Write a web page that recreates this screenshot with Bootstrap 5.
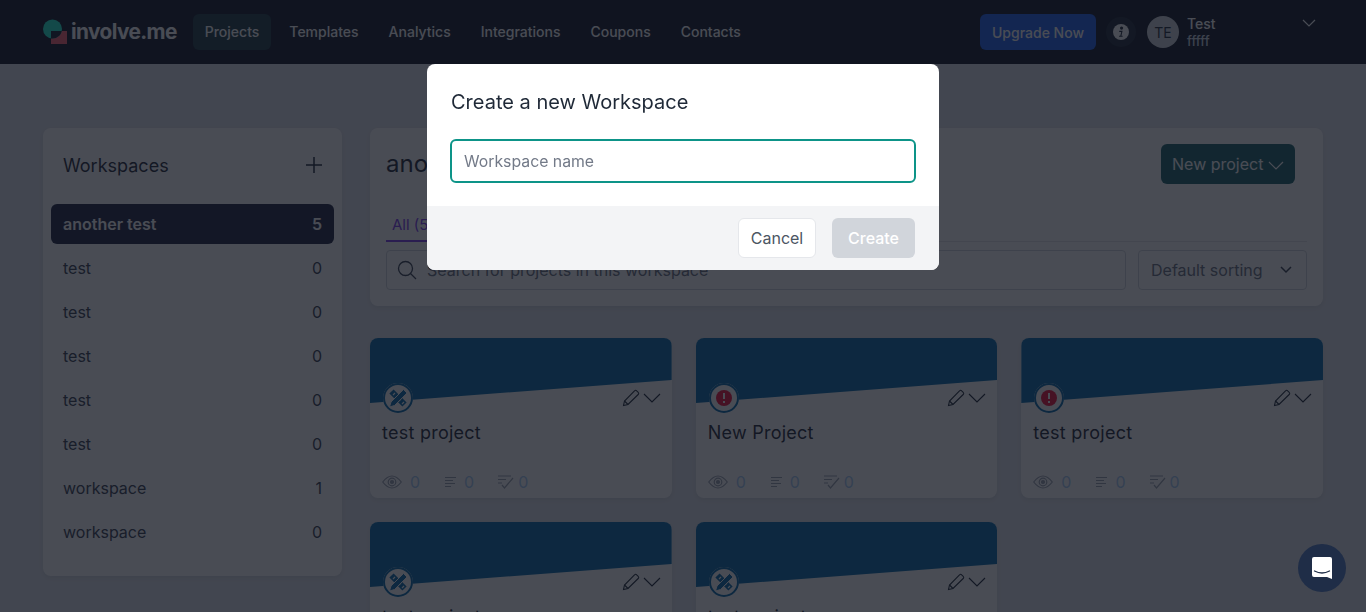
<!DOCTYPE html>
<html lang="en">
<head>
  <meta charset="UTF-8">
  <title>involve.me - Projects</title>
  <link href="https://cdn.jsdelivr.net/npm/bootstrap@5.3.0/dist/css/bootstrap.min.css" rel="stylesheet">
  <style>
    html, body { height: 100%; overflow: hidden; }
    body { font-family: Inter, "Liberation Sans", sans-serif; background: #e2e5ec; color: #1f2937; }

    /* top bar */
    .top-bar { height: 64px; background: #111827; padding: 0 43px; }
    .logo-text { font-size: 20.800px; font-weight: 700; color: #fff; letter-spacing: -.6px; margin-left: 4px; line-height: 1; }
    .top-link { font-size: 14px; font-weight: 500; color: #fff; padding: 0 12px; height: 36px; line-height: 36px; border-radius: 6px; text-decoration: none; }
    .top-link.is-active { background: #1d3b45; }
    .upgrade-btn { width: 116px; height: 36px; background: #1d5ff0; color: #fff; font-size: 14px; font-weight: 500; border: 0; border-radius: 6px; padding: 0; }
    .info-dot { width: 30px; height: 30px; border-radius: 50%; background: #1f2937; margin-left: 10px; }
    .avatar-dot { width: 32px; height: 32px; border-radius: 50%; background: #d1d5db; color: #1f2d3d; font-size: 14px; margin-left: 11px; }
    .user-name { font-size: 14px; font-weight: 500; color: #fff; line-height: 17px; }
    .user-sub { font-size: 13px; font-weight: 500; color: #cbd5e1; line-height: 18px; }
    .user-box { margin-left: 8px; width: 122px; }
    .user-caret { position: absolute; top: 19px; left: 1302px; }

    /* page */
    .page-wrap { padding: 64px 43px 0; gap: 28px; }
    .side-panel { width: 299px; height: 448px; flex: none; background: #fff; border: 0; border-radius: 8px; padding: 0 8px; }
    .side-head { height: 76px; padding: 0 12px 2px; font-size: 18px; }
    .ws-row { height: 40px; margin-bottom: 4px; padding: 0 12px; font-size: 16px; color: #374151; border-radius: 6px; }
    .ws-row.is-active { background: #1f2540; color: #fff; font-weight: 600; }
    .main-col { width: 953px; flex: none; }
    .head-panel { height: 178px; background: #fff; border: 0; border-radius: 8px; padding: 16px; position: relative; }
    .head-title { font-size: 24px; line-height: 40px; margin: 0; }
    .new-btn { position: absolute; top: 16px; right: 28px; width: 134px; height: 40px; background: #1c636b; color: #fff; font-size: 16px; border: 0; border-radius: 6px; padding: 0; }
    .tab-line { margin-top: 24px; height: 34px; border-bottom: 1px solid #e5e7eb; font-size: 15px; }
    .tab-all { display: inline-block; height: 34px; line-height: 34px; padding: 0 6px; color: #7c3aed; border-bottom: 2px solid #7c3aed; }
    .search-row { margin-top: 8px; gap: 12px; }
    .search-box { width: 740px; height: 40px; border: 1px solid #d1d5db; border-radius: 4px; padding-left: 10px; font-size: 16px; color: #6b7280; gap: 10px; }
    .sort-box { width: 169px; height: 40px; border: 1px solid #d1d5db; border-radius: 4px; padding: 0 14px 0 12px; font-size: 16px; color: #6b7280; }

    /* project cards */
    .grid-wrap { display: grid; grid-template-columns: repeat(3, 1fr); gap: 24px; margin-top: 32px; }
    .proj-card { height: 160px; background: #fff; border: 0; border-radius: 8px; position: relative; overflow: hidden; }
    .proj-banner { height: 65px; background: #076bab; clip-path: polygon(0 0, 100% 0, 100% 42px, 0 65px); }
    .proj-badge { position: absolute; left: 13px; top: 45px; width: 30px; height: 30px; border-radius: 50%; background: #fff; }
    .proj-tools { position: absolute; top: 51px; right: 11px; gap: 3px; }
    .proj-name { font-size: 18px; line-height: 28px; margin: 16px 12px 0; letter-spacing: .25px; }
    .proj-stats { margin: 23px 12px 0; height: 24px; font-size: 16px; color: #a8cdf5; }
    .stat-num { margin-left: 8px; margin-right: 24px; }
    .stat-num.tight { margin-left: 4px; }

    /* modal */
    .modal-backdrop.show { background: #10141e; opacity: .76; }
    .ws-dialog { max-width: 512px; margin: 64px auto 0; }
    .ws-content { border: 0; border-radius: 8px; overflow: hidden; }
    .ws-body { height: 142px; padding: 24px; }
    .ws-title { font-size: 20px; line-height: 28px; margin: 0 0 0; }
    .ws-input { margin: 23px 0 0 -1px; width: 466px; height: 44px; border: 2px solid #0d9488; border-radius: 6px; padding: 0 12px; font-size: 15.800px; box-shadow: none; }
    .ws-input::placeholder { color: #737a88; }
    .ws-foot { height: 64px; background: #f3f4f6; padding: 12px 24px; gap: 16px; }
    .btn-cancel { width: 78px; height: 40px; background: #fff; border: 1px solid #e5e7eb; border-radius: 6px; color: #4b5563; font-size: 16px; padding: 0; }
    .btn-create { width: 83px; height: 40px; background: #d1d5db; border: 0; border-radius: 6px; color: #fff; font-size: 16px; font-weight: 500; padding: 0; }

    /* chat bubble */
    .chat-bubble { position: fixed; left: 1298px; top: 544px; width: 48px; height: 48px; border-radius: 50%; background: #1f2d47; z-index: 1060; }
  </style>
</head>
<body>

  <!-- Navigation Bar -->
  <nav class="top-bar d-flex align-items-center">
    <svg width="24" height="26" viewBox="0 0 24 26">
      <clipPath id="logoClip"><rect x="8" y="12" width="16" height="13"/></clipPath>
      <rect x="8" y="12" width="16" height="13" fill="#ff6070"/>
      <circle cx="9.500" cy="10" r="9.500" fill="#20f0d0"/>
      <circle cx="9.500" cy="10" r="9.500" fill="#17202f" clip-path="url(#logoClip)"/>
    </svg>
    <span class="logo-text">involve.me</span>
    <div class="d-flex align-items-center" style="margin-left:16px;gap:6px">
      <a class="top-link is-active" href="#">Projects</a>
      <a class="top-link" href="#">Templates</a>
      <a class="top-link" href="#">Analytics</a>
      <a class="top-link" href="#">Integrations</a>
      <a class="top-link" href="#">Coupons</a>
      <a class="top-link" href="#">Contacts</a>
    </div>
    <div class="d-flex align-items-center ms-auto" style="margin-right:14px">
      <button class="upgrade-btn">Upgrade Now</button>
      <span class="info-dot d-flex align-items-center justify-content-center">
        <svg width="16" height="16" viewBox="0 0 14 14">
          <circle cx="7" cy="7" r="7" fill="#fff"/>
          <circle cx="7.500" cy="3.600" r="1.400" fill="#1f2937"/>
          <path d="M5.500 6h2.900l-1 4.200h1v1H5.300l.1-1h1l.8-3.200H5.400z" fill="#1f2937"/>
        </svg>
      </span>
      <span class="avatar-dot d-flex align-items-center justify-content-center">TE</span>
      <div class="user-box">
        <div class="user-name">Test</div>
        <div class="user-sub">fffff</div>
      </div>
    </div>
    <svg class="user-caret" width="14" height="8" viewBox="0 0 14 8" fill="none" stroke="#fff" stroke-width="1.200"><path d="M1 1l6 6 6-6"/></svg>
  </nav>

  <div class="page-wrap d-flex align-items-start">
    <!-- Workspaces -->
    <aside class="side-panel card shadow-sm">
      <div class="side-head d-flex align-items-center justify-content-between">
        <span>Workspaces</span>
        <svg width="16" height="16" viewBox="0 0 16 16" stroke="#1f2937" stroke-width="1.500"><path d="M8 0v16M0 8h16"/></svg>
      </div>
      <div class="ws-row is-active d-flex align-items-center justify-content-between"><span>another test</span><span>5</span></div>
      <div class="ws-row d-flex align-items-center justify-content-between"><span>test</span><span>0</span></div>
      <div class="ws-row d-flex align-items-center justify-content-between"><span>test</span><span>0</span></div>
      <div class="ws-row d-flex align-items-center justify-content-between"><span>test</span><span>0</span></div>
      <div class="ws-row d-flex align-items-center justify-content-between"><span>test</span><span>0</span></div>
      <div class="ws-row d-flex align-items-center justify-content-between"><span>test</span><span>0</span></div>
      <div class="ws-row d-flex align-items-center justify-content-between"><span>workspace</span><span>1</span></div>
      <div class="ws-row d-flex align-items-center justify-content-between"><span>workspace</span><span>0</span></div>
    </aside>

    <main class="main-col">
      <section class="head-panel card shadow-sm d-block">
        <h1 class="head-title fw-normal">another test</h1>
        <button class="new-btn">New project
          <svg width="16" height="9" viewBox="0 0 16 9" fill="none" stroke="#fff" stroke-width="1.200"><path d="M1 1l7 7 7-7"/></svg>
        </button>
        <div class="tab-line"><span class="tab-all">All (5)</span></div>
        <div class="search-row d-flex">
          <div class="search-box d-flex align-items-center">
            <svg width="20" height="20" viewBox="0 0 20 20" fill="none" stroke="#374151" stroke-width="1.300"><circle cx="8.500" cy="8.500" r="7"/><path d="M13.500 13.500l5.500 5.500"/></svg>
            <span>Search for projects in this workspace</span>
          </div>
          <div class="sort-box d-flex align-items-center justify-content-between">
            <span>Default sorting</span>
            <svg width="12" height="8" viewBox="0 0 12 8" fill="none" stroke="#374151" stroke-width="1.500"><path d="M1 1l5 5 5-5"/></svg>
          </div>
        </div>
      </section>

      <div class="grid-wrap" id="grid"></div>
    </main>
  </div>

  <!-- Modal -->
  <div class="modal-backdrop show"></div>
  <div class="modal d-block" tabindex="-1">
    <div class="modal-dialog ws-dialog">
      <div class="modal-content ws-content">
        <div class="ws-body">
          <h2 class="ws-title fw-normal">Create a new Workspace</h2>
          <input type="text" class="form-control ws-input" placeholder="Workspace name">
        </div>
        <div class="ws-foot d-flex justify-content-end">
          <button class="btn-cancel">Cancel</button>
          <button class="btn-create">Create</button>
        </div>
      </div>
    </div>
  </div>

  <!-- Chat bubble -->
  <div class="chat-bubble d-flex align-items-center justify-content-center">
    <svg width="22" height="24" viewBox="0 0 22 24">
      <path d="M3 1h16a2 2 0 0 1 2 2v20l-5-2H3a2 2 0 0 1-2-2V3a2 2 0 0 1 2-2z" fill="#fff"/>
      <path d="M3.500 15q7.500 4 15 0" fill="none" stroke="#1f2d47" stroke-width="1.300" stroke-linecap="round"/>
    </svg>
  </div>

  <script src="https://cdn.jsdelivr.net/npm/bootstrap@5.3.0/dist/js/bootstrap.bundle.min.js"></script>
  <script>
    const badgeRing = `<circle cx="15" cy="15" r="14" fill="none" stroke="#076bab" stroke-width="2"/>`;
    // crossed ruler and pencil
    const toolsIcon = `<svg width="30" height="30" viewBox="0 0 30 30">${badgeRing}
      <path d="M8.500 8.500L21.500 21.500" stroke="#076bab" stroke-width="6"/>
      <path d="M10 12l2-2M13 15l2-2M16 18l2-2M19 21l2-2" stroke="#fff" stroke-width="1.200"/>
      <path d="M20.500 6.500l3.500 3.500L11.500 22.500l-5 1.500L8 19z" fill="#076bab" stroke="#fff" stroke-width="1"/>
    </svg>`;
    const alertIcon = `<svg width="30" height="30" viewBox="0 0 30 30">${badgeRing}
      <circle cx="15" cy="15" r="8" fill="#f00f38"/>
      <path d="M15 10v6M15 18v2" stroke="#fff" stroke-width="2"/>
    </svg>`;
    const projects = [
      ['test project', toolsIcon], ['New Project', alertIcon], ['test project', alertIcon],
      ['test project', toolsIcon], ['test project', toolsIcon]
    ];

    // Project cards
    document.getElementById('grid').innerHTML = projects.map(([name, icon]) => `
      <div class="proj-card card shadow-sm d-block">
        <div class="proj-banner"></div>
        <div class="proj-badge">${icon}</div>
        <div class="proj-tools d-flex align-items-center">
          <svg width="18" height="18" viewBox="0 0 18 18" fill="none" stroke="#1f2937" stroke-width="1.100"><path d="M1.500 16.500l1-4.500L12.500 1.800a1.500 1.500 0 0 1 2.200 0l1.500 1.500a1.500 1.500 0 0 1 0 2.200L6 15.500z"/><path d="M2.500 12l3.500 3.500"/></svg>
          <svg width="18" height="10" viewBox="0 0 18 10" fill="none" stroke="#1f2937" stroke-width="1.100"><path d="M1 1l8 8 8-8"/></svg>
        </div>
        <div class="proj-name">${name}</div>
        <div class="proj-stats d-flex align-items-center">
          <svg width="20" height="14" viewBox="0 0 20 14" fill="none" stroke="#9ca3af" stroke-width="1.200"><path d="M.7 7Q10-5 19.300 7 10 19 .7 7z"/><circle cx="10" cy="7" r="3.800"/><circle cx="10" cy="7" r="1.500" fill="#9ca3af"/></svg>
          <span class="stat-num">0</span>
          <svg width="12" height="12" viewBox="0 0 12 12" stroke="#9ca3af" stroke-width="1.200"><path d="M1 1.500h11M1 4.500h8M1 7.500h10M1 10.500h6"/></svg>
          <span class="stat-num">0</span>
          <svg width="16" height="14" viewBox="0 0 16 14" fill="none" stroke="#9ca3af" stroke-width="1.200"><path d="M0 1h13M0 4.500h8M0 8h4M4 10l2.500 3L15 3"/></svg>
          <span class="stat-num tight">0</span>
        </div>
      </div>`).join('');
  </script>
</body>
</html>
